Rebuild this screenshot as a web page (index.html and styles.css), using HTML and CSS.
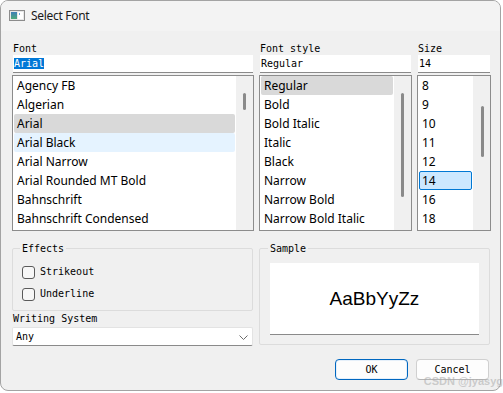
FILE: index.html
```html
<!DOCTYPE html>
<html lang="en">
  <head>
    <meta charset="UTF-8" />
    <title>Select Font</title>
    <link rel="stylesheet" href="styles.css">
  </head>
  <body>
    <div class="window">
      <div class="titlebar">
        <svg class="app-icon" width="16" height="11" viewBox="0 0 16 11">
          <rect x="0.5" y="0.5" width="15" height="10" fill="#e8e8e8" stroke="#8c8c8c" />
          <defs>
            <linearGradient id="pane" x1="0" y1="0" x2="0" y2="1">
              <stop offset="0" stop-color="#3f7fb8" />
              <stop offset="1" stop-color="#4caa7a" />
            </linearGradient>
          </defs>
          <rect x="2" y="2" width="6" height="7" fill="url(#pane)" />
          <rect x="9" y="2" width="5" height="7" fill="#ffffff" />
          <rect x="10" y="3" width="1" height="2" fill="#6fa8d8" />
        </svg>
        <span class="title">Select Font</span>
      </div>

      <div class="content">
        <div class="pickers">
          <div class="picker">
            <div class="caption">Font</div>
            <div class="line-edit"><span class="selected-text">Arial</span></div>
            <div class="list">
              <ul class="items">
                <li>Agency FB</li>
                <li>Algerian</li>
                <li class="current">Arial</li>
                <li class="hover">Arial Black</li>
                <li>Arial Narrow</li>
                <li>Arial Rounded MT Bold</li>
                <li>Bahnschrift</li>
                <li>Bahnschrift Condensed</li>
              </ul>
              <div class="scrollbar"><div class="thumb font-thumb"></div></div>
            </div>
          </div>

          <div class="picker">
            <div class="caption">Font style</div>
            <div class="line-edit">Regular</div>
            <div class="list">
              <ul class="items">
                <li class="current">Regular</li>
                <li>Bold</li>
                <li>Bold Italic</li>
                <li>Italic</li>
                <li>Black</li>
                <li>Narrow</li>
                <li>Narrow Bold</li>
                <li>Narrow Bold Italic</li>
              </ul>
              <div class="scrollbar"><div class="thumb style-thumb"></div></div>
            </div>
          </div>

          <div class="picker">
            <div class="caption">Size</div>
            <div class="line-edit">14</div>
            <div class="list">
              <ul class="items">
                <li>8</li>
                <li>9</li>
                <li>10</li>
                <li>11</li>
                <li>12</li>
                <li class="focused">14</li>
                <li>16</li>
                <li>18</li>
              </ul>
              <div class="scrollbar"><div class="thumb size-thumb"></div></div>
            </div>
          </div>
        </div>

        <div class="lower">
          <div class="left-col">
            <fieldset class="group effects">
              <legend>Effects</legend>
              <div class="check"><span class="box"></span>Strikeout</div>
              <div class="check"><span class="box"></span>Underline</div>
            </fieldset>
            <div class="caption ws-caption">Writing System</div>
            <div class="combo">
              <span>Any</span>
              <svg class="chevron" width="9" height="5" viewBox="0 0 9 5">
                <polyline points="0.5,0.5 4.5,4.5 8.5,0.5" fill="none" stroke="#6b6b6b" stroke-width="1" />
              </svg>
            </div>
          </div>

          <fieldset class="group sample">
            <legend>Sample</legend>
            <div class="sample-box">AaBbYyZz</div>
          </fieldset>
        </div>

        <div class="buttons">
          <button class="btn default">OK</button>
          <button class="btn">Cancel</button>
        </div>
      </div>
    </div>

    <div class="watermark">CSDN @jyasyg</div>
  </body>
</html>
```

FILE: styles.css
```css
* {
  margin: 0;
  padding: 0;
  box-sizing: border-box;
}
body {
  background-color: #ffffff;
  width: 503px;
  height: 393px;
  overflow: hidden;
  position: relative;
  font-family: "DejaVu Sans Mono", monospace;
  font-size: 10px;
  line-height: 12px;
  color: #000;
}
.window {
  width: 501px;
  height: 391px;
  background-color: #f0f0f0;
  border: 1px solid #a3a3a3;
  border-radius: 8px;
  overflow: hidden;
}
.titlebar {
  height: 30px;
  background-color: #f3f3f3;
  display: flex;
  align-items: center;
  padding-left: 8px;
  gap: 6px;
}
.app-icon {
  display: block;
  margin-top: -1px;
}
.title {
  font-family: "Noto Sans", sans-serif;
  font-size: 12px;
  line-height: 16px;
  letter-spacing: -0.3px;
  color: #1a1a1a;
}
.content {
  padding: 12px 9px 0 11px;
}

/* font / style / size pickers */
.pickers {
  display: grid;
  grid-template-columns: 242px 153px 74px;
  column-gap: 5px;
}
.caption {
  height: 12px;
  padding-left: 1px;
}
.line-edit {
  height: 18px;
  margin: 0 1px;
  padding: 3px 1px 0;
  background: #fff;
  border-bottom: 1px solid #8a8a8a;
  white-space: nowrap;
}
.selected-text {
  background-color: #0078d7;
  color: #fff;
}
.list {
  display: flex;
  height: 156px;
  margin-top: 2px;
  background: #fff;
  border: 1px solid #8c8c8c;
  overflow: hidden;
}
.items {
  flex: 1;
  list-style: none;
  padding: 0 1px;
  font-family: "Noto Sans", sans-serif;
  font-size: 12px;
  line-height: 19px;
}
.items li {
  height: 19px;
  padding-left: 3px;
  border-radius: 2px;
  white-space: nowrap;
}
.items li.current {
  background-color: #d9d9d9;
}
.items li.hover {
  background-color: #e5f3ff;
}
.items li.focused {
  background-color: #cce8ff;
  border: 1px solid #0078d4;
  padding-left: 2px;
  line-height: 17px;
}
.scrollbar {
  width: 17px;
  flex: none;
  background-color: #f0f0f0;
}
.thumb {
  width: 3px;
  margin-left: 7px;
  border-radius: 2px;
  background-color: #8a8a8a;
}
.font-thumb {
  margin-top: 17px;
  height: 17px;
}
.style-thumb {
  margin-top: 17px;
  height: 104px;
}
.size-thumb {
  margin-top: 30px;
  margin-left: 8px;
  height: 51px;
}

/* effects / sample */
.lower {
  display: grid;
  grid-template-columns: 241px 231px;
  column-gap: 6px;
  margin-top: 11px;
}
.group {
  border: 1px solid #dcdcdc;
  border-radius: 2px;
  min-width: 0;
}
.group legend {
  margin-left: -2px;
  padding: 0 2px;
  line-height: 13px;
}
.effects {
  height: 69px;
  padding: 6px 9px 0;
}
.check {
  display: flex;
  align-items: center;
  gap: 5px;
  height: 22px;
}
.box {
  width: 13px;
  height: 13px;
  border: 1px solid #5a5a5a;
  border-radius: 3px;
  background-color: #f7f7f7;
}
.ws-caption {
  margin-top: 2px;
  padding-left: 1px;
}
.combo {
  display: flex;
  align-items: center;
  justify-content: space-between;
  height: 19px;
  margin-top: 2px;
  padding: 1px 4px 0 3px;
  background-color: #fff;
  border: 1px solid #e3e3e3;
  border-bottom-color: #8a8a8a;
  border-radius: 2px;
}
.chevron {
  display: block;
}
.sample {
  height: 103px;
  padding: 8px 10px 0;
}
.sample-box {
  height: 72px;
  background-color: #fff;
  border-bottom: 1px solid #8a8a8a;
  display: flex;
  align-items: center;
  justify-content: center;
  font-family: "Liberation Sans", Arial, sans-serif;
  font-size: 19px;
}

/* dialog buttons */
.buttons {
  display: flex;
  justify-content: flex-end;
  gap: 8px;
  margin-top: 13px;
  padding-right: 2px;
}
.btn {
  width: 73px;
  height: 21px;
  background-color: #fdfdfd;
  border: 1px solid #d0d0d0;
  border-bottom-color: #b5b5b5;
  border-radius: 4px;
  font-family: "DejaVu Sans Mono", monospace;
  font-size: 10px;
  color: #000;
}
.btn.default {
  border: 1px solid #0067c0;
  box-shadow: inset 0 0 0 1px #e6f0fa;
}
.watermark {
  position: absolute;
  right: 0;
  bottom: 6px;
  font-family: "Liberation Sans", sans-serif;
  font-size: 11px;
  font-weight: bold;
  color: rgba(170, 170, 170, 0.55);
  white-space: nowrap;
}
```
